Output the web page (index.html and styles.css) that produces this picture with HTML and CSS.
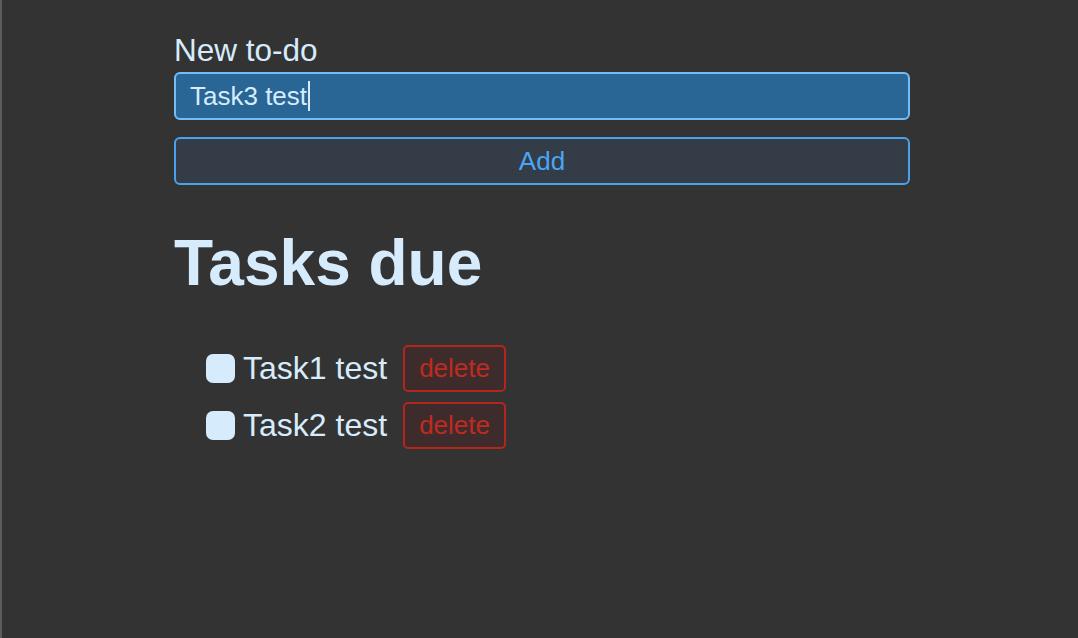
FILE: index.html
```html
<!DOCTYPE html>
<html>
<head>
<meta charset="utf-8">
<link rel="stylesheet" href="styles.css">
</head>
<body>
<main class="app">
  <form class="new-form">
    <label class="new-label" for="new-todo">New to-do</label>
    <div class="new-input">Task3 test<span class="caret"></span></div>
    <button type="button" class="add-btn">Add</button>
  </form>
  <h1 class="title">Tasks due</h1>
  <ul class="tasks">
    <li class="task"><span class="check"></span><span class="task-name">Task1 test</span><button type="button" class="del-btn">delete</button></li>
    <li class="task"><span class="check"></span><span class="task-name">Task2 test</span><button type="button" class="del-btn">delete</button></li>
  </ul>
</main>
</body>
</html>
```
FILE: styles.css
```css
html, body {
  margin: 0;
  height: 100%;
}
body {
  background: #333333;
  border-left: 2px solid #5c5c5c;
  box-sizing: border-box;
  font-family: "Liberation Sans", Arial, sans-serif;
  color: #d6ecfc;
}
.app {
  width: 736px;
  margin-left: 172px;
  padding-top: 31px;
}
.new-form {
  display: flex;
  flex-direction: column;
}
.new-label {
  font-size: 31.5px;
  line-height: 38px;
  height: 41px;
}
.new-input {
  box-sizing: border-box;
  height: 48px;
  background: #296595;
  border: 2px solid #74bdf5;
  border-radius: 6px;
  padding: 0 14px;
  font-size: 26px;
  line-height: 44px;
  color: #d6ecfc;
  display: flex;
  align-items: center;
}
.caret {
  display: inline-block;
  width: 2px;
  height: 30px;
  background: #d6ecfc;
  margin-left: 1px;
}
.add-btn {
  margin-top: 17px;
  box-sizing: border-box;
  height: 48px;
  background: #343c47;
  border: 2px solid #4aa3ea;
  border-radius: 6px;
  color: #4aa6f2;
  font-family: inherit;
  font-size: 26px;
  padding: 0;
}
.title {
  margin: 38px 0 0;
  font-size: 64px;
  line-height: 80px;
  font-weight: bold;
}
.tasks {
  list-style: none;
  margin: 42px 0 0;
  padding: 0 0 0 32px;
  display: flex;
  flex-direction: column;
  gap: 10px;
}
.task {
  display: flex;
  align-items: center;
  height: 47px;
}
.check {
  width: 29px;
  height: 29px;
  border-radius: 7px;
  background: #d6ecfc;
  flex: none;
}
.task-name {
  margin-left: 8px;
  font-size: 32px;
}
.del-btn {
  margin-left: 16px;
  box-sizing: border-box;
  height: 47px;
  width: 103px;
  background: #3e2c2c;
  border: 2px solid #b3261e;
  border-radius: 5px;
  color: #c02a20;
  font-family: inherit;
  font-size: 26px;
  padding: 0;
}
```
